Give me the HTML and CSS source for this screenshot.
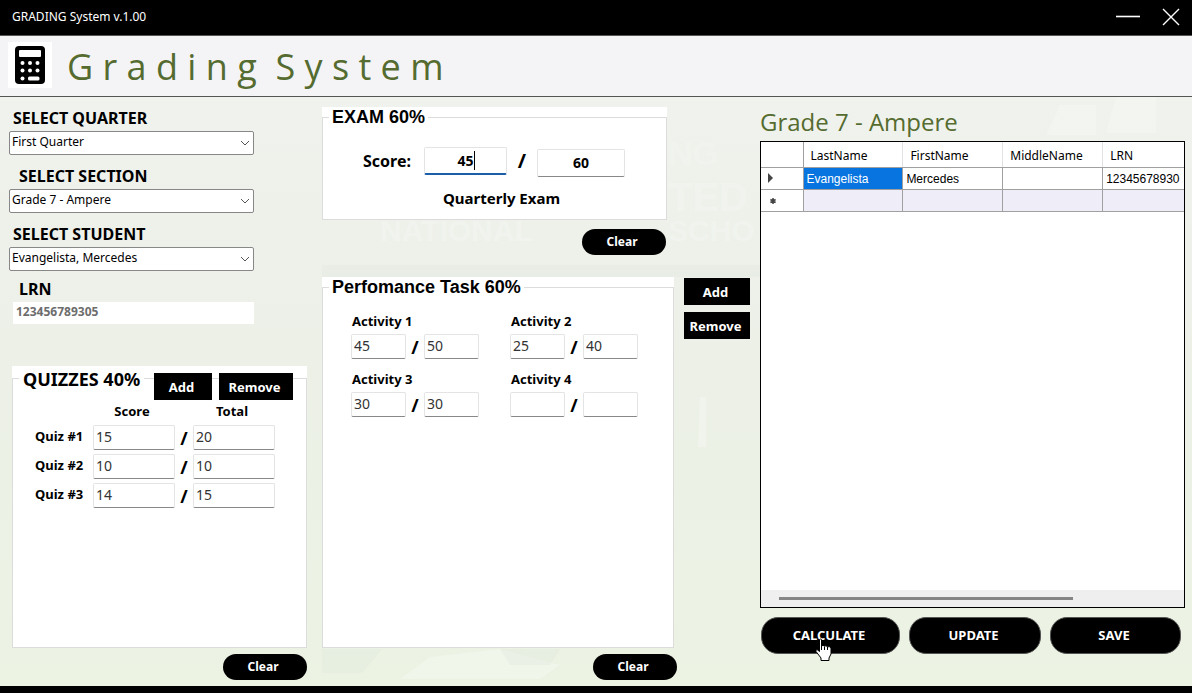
FILE: index.html
```html
<!DOCTYPE html>
<html lang="en">
<head>
<meta charset="utf-8">
<title>GRADING System v.1.00</title>
<link rel="stylesheet" href="styles.css">
</head>
<body>
<div class="window">
  <header class="titlebar">
    <span class="titlebar-text">GRADING System v.1.00</span>
    <div class="titlebar-buttons">
      <button type="button" class="window-button" aria-label="Minimize">
        <svg width="26" height="20" viewBox="0 0 26 20"><path d="M1 9.500H25" stroke="#fff" stroke-width="1.600"/></svg>
      </button>
      <button type="button" class="window-button" aria-label="Close">
        <svg width="20" height="20" viewBox="0 0 20 20"><path d="M2 2L18 18M18 2L2 18" stroke="#fff" stroke-width="1.400"/></svg>
      </button>
    </div>
  </header>

  <div class="brand">
    <svg class="brand-icon" viewBox="0 0 44 46" aria-hidden="true">
      <rect width="44" height="46" fill="#fff"/>
      <rect x="7" y="4" width="30" height="38" rx="4" fill="#000"/>
      <rect x="11" y="8" width="22" height="7" rx="1" fill="#fff"/>
      <g fill="#fff">
        <circle cx="14.500" cy="21" r="2"/><circle cx="22" cy="21" r="2"/><circle cx="29.500" cy="21" r="2"/>
        <circle cx="14.500" cy="28.500" r="2"/><circle cx="22" cy="28.500" r="2"/><circle cx="29.500" cy="28.500" r="2"/>
        <circle cx="14.500" cy="36.500" r="2"/><rect x="20" y="34.500" width="11.500" height="4" rx="1.500"/>
      </g>
    </svg>
    <h1 class="brand-title">G r a d i n g  S y s t e m</h1>
  </div>

  <main class="content">
    <svg class="backdrop" viewBox="0 0 1192 589" preserveAspectRatio="none" aria-hidden="true">
      <g fill="#f8faf4" opacity=".4">
        <path d="M1060 8h36v30h-50zM1116 0h40v36h-50z"/>
        <path d="M430 560l70-8 60 16-20 14H400z"/>
        <path d="M700 300h6v50h-8z"/>
      </g>
      <g fill="#e2e9de" opacity=".4">
        <path d="M322 552h60l-20 24h-40zM500 552h60l-10 16h-40z"/>
        <path d="M322 168h440v12H322z"/>
      </g>
      <g class="sign">
        <text x="668" y="68" font-size="34">NG</text>
        <text x="668" y="114" font-size="40">TED</text>
        <text x="380" y="144" font-size="30">NATIONAL</text>
        <text x="668" y="144" font-size="30">SCHO</text>
      </g>
    </svg>

    <section class="column column-student">
      <div class="field">
        <label for="quarter">SELECT QUARTER</label>
        <select id="quarter" class="combo"><option>First Quarter</option></select>
      </div>
      <div class="field">
        <label class="indent" for="section">SELECT SECTION</label>
        <select id="section" class="combo"><option>Grade 7 - Ampere</option></select>
      </div>
      <div class="field field-student">
        <label for="student">SELECT STUDENT</label>
        <select id="student" class="combo"><option>Evangelista, Mercedes</option></select>
      </div>
      <div class="field field-lrn">
        <label class="indent" for="lrn">LRN</label>
        <input id="lrn" class="lrn" type="text" value="123456789305" readonly>
      </div>

      <div class="panel panel-quizzes">
        <fieldset class="group">
          <legend class="legend legend-quizzes">QUIZZES 40%</legend>
          <div class="quiz-grid">
            <span></span><span class="quiz-head">Score</span><span></span><span class="quiz-head">Total</span>
            <label for="q1">Quiz #1</label><input id="q1" class="box" type="text" value="15"><span class="slash">/</span><input class="box" type="text" value="20" aria-label="Quiz #1 total">
            <label for="q2">Quiz #2</label><input id="q2" class="box" type="text" value="10"><span class="slash">/</span><input class="box" type="text" value="10" aria-label="Quiz #2 total">
            <label for="q3">Quiz #3</label><input id="q3" class="box" type="text" value="14"><span class="slash">/</span><input class="box" type="text" value="15" aria-label="Quiz #3 total">
          </div>
        </fieldset>
        <div class="quiz-actions">
          <button type="button" class="square">Add</button>
          <button type="button" class="square">Remove</button>
        </div>
      </div>
      <button type="button" class="pill">Clear</button>
    </section>

    <section class="column column-work">
      <div class="work-exam">
        <div class="panel">
          <fieldset class="group">
            <legend class="legend">EXAM 60%</legend>
            <div class="exam-row">
              <label for="exam">Score:</label>
              <div class="exam-box focused"><input id="exam" class="box exam-input" type="text" value="45"><span class="caret"></span></div>
              <span class="slash slash-exam">/</span>
              <div class="exam-box exam-total"><input class="box exam-input" type="text" value="60" aria-label="Exam total"></div>
            </div>
            <p class="exam-name">Quarterly Exam</p>
          </fieldset>
        </div>
        <button type="button" class="pill">Clear</button>
      </div>

      <div class="work-tasks">
        <div class="panel panel-tasks">
          <fieldset class="group">
            <legend class="legend">Perfomance Task 60%</legend>
            <div class="task-grid">
              <div class="task"><label for="a1">Activity 1</label><div class="task-row"><input id="a1" class="box" type="text" value="45"><span class="slash">/</span><input class="box" type="text" value="50" aria-label="Activity 1 total"></div></div>
              <div class="task"><label for="a2">Activity 2</label><div class="task-row"><input id="a2" class="box" type="text" value="25"><span class="slash">/</span><input class="box" type="text" value="40" aria-label="Activity 2 total"></div></div>
              <div class="task"><label for="a3">Activity 3</label><div class="task-row"><input id="a3" class="box" type="text" value="30"><span class="slash">/</span><input class="box" type="text" value="30" aria-label="Activity 3 total"></div></div>
              <div class="task"><label for="a4">Activity 4</label><div class="task-row"><input id="a4" class="box" type="text"><span class="slash">/</span><input class="box" type="text" aria-label="Activity 4 total"></div></div>
            </div>
          </fieldset>
        </div>
        <div class="task-actions">
          <button type="button" class="square">Add</button>
          <button type="button" class="square">Remove</button>
        </div>
      </div>
      <button type="button" class="pill pill-tasks">Clear</button>
    </section>

    <section class="column column-list">
      <h2 class="list-title">Grade 7 - Ampere</h2>
      <div class="list">
        <div class="list-view">
          <table class="table">
            <thead>
              <tr><th class="marker"></th><th>LastName</th><th>FirstName</th><th>MiddleName</th><th>LRN</th></tr>
            </thead>
            <tbody>
              <tr>
                <td class="marker"><svg width="12" height="10" viewBox="0 0 12 10"><path d="M4 0L9 5L4 10Z" fill="#444"/></svg></td>
                <td class="selected">Evangelista</td><td>Mercedes</td><td></td><td>12345678930</td>
              </tr>
              <tr class="new-row">
                <td class="marker"><svg width="16" height="8" viewBox="0 0 16 8"><path d="M9 1V7M6.400 2.500L11.600 5.500M11.600 2.500L6.400 5.500" stroke="#444" stroke-width="1.500"/></svg></td>
                <td></td><td></td><td></td><td></td>
              </tr>
            </tbody>
          </table>
        </div>
        <div class="scroll"><div class="scroll-thumb"></div></div>
      </div>
      <div class="list-actions">
        <div class="calculate">
          <button type="button" class="action">CALCULATE</button>
          <svg class="pointer" width="18" height="24" viewBox="0 0 18 24" aria-hidden="true"><path d="M4.500 1.500Q5.500 .5 6.500 1.500V8Q8 6.800 9.500 8Q11 7.200 12.500 8.800Q14.500 8 16 10V16L14 20V22.500H6V20L1 13.500Q.5 11.500 2 11.500L4.500 13.500Z" fill="#fff" stroke="#000"/><path d="M6.500 8V12M9.500 8.500V12M12.500 9V12" stroke="#000"/></svg>
        </div>
        <button type="button" class="action">UPDATE</button>
        <button type="button" class="action">SAVE</button>
      </div>
    </section>
  </main>
  <footer class="bottom-edge"></footer>
</div>
</body>
</html>
```

FILE: styles.css
```css
* { box-sizing: border-box; }

body {
  margin: 0;
  font-family: "Noto Sans", "Open Sans", sans-serif;
  font-size: 13px;
  line-height: 20px;
  color: #000;
}

h1, h2, p { margin: 0; }

button, input, select {
  font: inherit;
  color: inherit;
}

.window {
  display: flex;
  flex-direction: column;
  min-height: 100vh;
}

/* Title bar */
.titlebar {
  display: flex;
  align-items: center;
  justify-content: space-between;
  height: 36px;
  padding: 0 11px 2px 12px;
  background: #000;
  border-bottom: 1px solid #555;
  color: #fff;
  font-size: 12px;
}

.titlebar-buttons { display: flex; gap: 20px; }

.window-button {
  display: flex;
  padding: 0;
  border: 0;
  background: none;
}

/* Brand strip */
.brand {
  display: flex;
  align-items: center;
  gap: 15px;
  height: 61px;
  padding: 0 8px 2px;
  background: #f4f4f6;
  border-bottom: 1px solid #555;
}

.brand-icon { width: 44px; height: 46px; }

.brand-title {
  padding-top: 4px;
  color: #556b2f;
  font-family: "Open Sans", sans-serif;
  font-size: 36px;
  font-weight: 400;
  line-height: 52px;
  white-space: pre;
}

/* Main area */
.content {
  position: relative;
  flex: 1;
  display: grid;
  grid-template-columns: 304fr 428fr 425fr;
  gap: 10px;
  padding: 10px 7px 6px 8px;
  background: linear-gradient(#f0f2ed, #ecf0e7 45%, #ecf3e3);
}

.backdrop {
  position: absolute;
  inset: 0;
  width: 100%;
  height: 100%;
}

.sign {
  fill: #f1f4ee;
  font-family: "Liberation Sans", Arial, sans-serif;
  font-weight: 700;
}

.column {
  position: relative;
  display: flex;
  flex-direction: column;
  min-width: 0;
}

.bottom-edge { height: 7px; background: #000; }

/* Student fields */
.column-student { padding-top: 1px; }

.field {
  display: flex;
  flex-direction: column;
  gap: 3px;
  width: 246px;
  padding: 0 0 11px 1px;
}

.field label {
  padding-left: 4px;
  font-size: 16px;
  font-weight: 700;
}

.field .indent { padding-left: 10px; }

.combo {
  height: 24px;
  padding: 0 22px 3px 2px;
  border: 1px solid #888;
  border-radius: 2px;
  appearance: none;
  background: #fff url("data:image/svg+xml,%3Csvg xmlns='http://www.w3.org/2000/svg' width='10' height='6'%3E%3Cpath d='M1 1l4 4 4-4' fill='none' stroke='%23555'/%3E%3C/svg%3E") no-repeat right 3px center;
  font-size: 12px;
}

.field-student { padding-bottom: 8px; }
.field-lrn { padding-left: 5px; }
.field-lrn .indent { padding-left: 6px; }

.lrn {
  height: 22px;
  padding: 0 3px 3px;
  border: 0;
  background: #fff;
  color: #6d6d6d;
  font-size: 12px;
  font-weight: 700;
}

/* Group boxes */
.panel { background: #fff; display: flex; }

.group {
  flex: 1;
  min-width: 0;
  margin: 0;
  padding: 0;
  border: 1px solid #dcdcdc;
}

.legend {
  margin-left: 6px;
  padding: 0 3px;
  font-family: "Liberation Sans", Arial, sans-serif;
  font-size: 18px;
  font-weight: 700;
  line-height: 20px;
}

.legend-quizzes {
  padding: 1px 4px 0;
  font-family: "Noto Sans", sans-serif;
  line-height: 24px;
}

.box {
  width: 100%;
  min-width: 0;
  height: 25px;
  padding: 0 2px 3px;
  border: 1px solid #e4e4e4;
  border-bottom-color: #888;
  border-radius: 2px;
  background: #fff;
  color: #333;
  font-size: 14px;
  font-weight: 400;
}

.slash {
  font-size: 18px;
  font-weight: 700;
  text-align: center;
}

/* Buttons */
.square {
  height: 27px;
  padding: 0 3px 0 0;
  border: 0;
  background: #000;
  color: #fff;
  font-weight: 700;
}

.pill {
  width: 84px;
  height: 26px;
  padding: 0 4px 1px 0;
  border: 0;
  border-radius: 13px;
  background: #000;
  color: #fff;
  font-size: 12px;
  font-weight: 700;
}

/* Quizzes */
.panel-quizzes {
  position: relative;
  flex: 1;
  margin: 31px 5px 6px 4px;
}

.quiz-actions {
  position: absolute;
  top: 7px;
  right: 14px;
  display: grid;
  grid-template-columns: 58px 74px;
  gap: 7px;
}

.quiz-grid {
  display: grid;
  grid-template-columns: 58px 82px 18px 82px;
  align-items: center;
  row-gap: 4px;
  padding: 10px 0 0 22px;
  font-weight: 700;
}

.quiz-grid label { padding-bottom: 4px; }
.quiz-head { padding-right: 4px; text-align: center; }

.column-student .pill { align-self: flex-end; margin-right: 5px; }

/* Exam */
.work-exam {
  display: flex;
  flex-direction: column;
  align-items: flex-end;
  gap: 9px;
  width: 345px;
}

.work-exam .panel { width: 100%; height: 113px; }
.work-exam .pill { margin-right: 1px; }

.exam-row {
  display: grid;
  grid-template-columns: 60px 83px 28px 88px;
  column-gap: 1px;
  align-items: center;
  padding: 18px 0 0 40px;
  font-size: 15px;
  font-weight: 700;
}

.exam-row label { font-size: 16px; }
.exam-box { position: relative; display: flex; }
.exam-total { padding-top: 4px; }

.exam-input {
  height: 28px;
  padding-bottom: 1px;
  color: #000;
  font-size: 14px;
  font-weight: 700;
  text-align: center;
}

.focused .exam-input { border-bottom: 2px solid #1a5fa8; }

.caret {
  position: absolute;
  top: 4px;
  left: 50px;
  width: 1px;
  height: 19px;
  background: #000;
}

.slash-exam { font-size: 20px; }

.exam-name {
  padding: 11px 0 0 14px;
  font-size: 15px;
  font-weight: 700;
  text-align: center;
}

/* Performance tasks */
.work-tasks {
  flex: 1;
  display: grid;
  grid-template-columns: 352fr 66fr;
  gap: 10px;
  margin-top: 22px;
}

.task-grid {
  display: grid;
  grid-template-columns: 128px 128px;
  column-gap: 31px;
  row-gap: 10px;
  padding: 14px 0 0 28px;
}

.task label { padding-left: 1px; font-weight: 700; }
.task-row {
  display: grid;
  grid-template-columns: 55px 18px 55px;
  align-items: center;
  padding-top: 3px;
}

.task-actions {
  display: flex;
  flex-direction: column;
  gap: 7px;
  padding-top: 1px;
}

.pill-tasks { margin: 6px 0 0 271px; }

/* Class list */
.list-title {
  color: #556b2f;
  font-family: "Open Sans", sans-serif;
  font-size: 24px;
  font-weight: 400;
  line-height: 30px;
}

.list {
  flex: 1;
  display: flex;
  flex-direction: column;
  margin-top: 4px;
  border: 1px solid #000;
  background: #fff;
}

.list-view { flex: 1; overflow: hidden; }

.table {
  width: 442px;
  table-layout: fixed;
  border-collapse: collapse;
}

.table th, .table td {
  height: 22px;
  padding: 1px 3px 0;
  border: 1px solid #a0a0a0;
  border-top: 0;
  font-family: "Liberation Sans", Arial, sans-serif;
  font-size: 12px;
  font-weight: 400;
  line-height: 20px;
  text-align: left;
}

.table th {
  height: 25px;
  padding: 3px 7px 0;
  border-color: #e2e2e2;
  border-bottom-color: #a0a0a0;
  font-family: "Noto Sans", sans-serif;
}

.table .marker { width: 42px; border-left: 0; border-right-color: #a0a0a0; }
.table .selected { background: #0874e0; color: #fff; }
.new-row td { background: #efedf8; }
.new-row .marker { background: #fff; }

.scroll {
  height: 17px;
  padding: 7px 111px 0 18px;
  background: #efefef;
}

.scroll-thumb { height: 3px; background: #858585; }

.list-actions {
  display: grid;
  grid-template-columns: 139fr 132fr 131fr;
  gap: 9px;
  padding: 9px 4px 26px 1px;
}

.calculate { position: relative; display: grid; }

.action {
  height: 37px;
  padding: 0 3px 1px 0;
  border: 1px solid #555;
  border-radius: 17px;
  background: #000;
  color: #fff;
  font-weight: 700;
}

.pointer {
  position: absolute;
  top: 21px;
  left: 54px;
}
```
